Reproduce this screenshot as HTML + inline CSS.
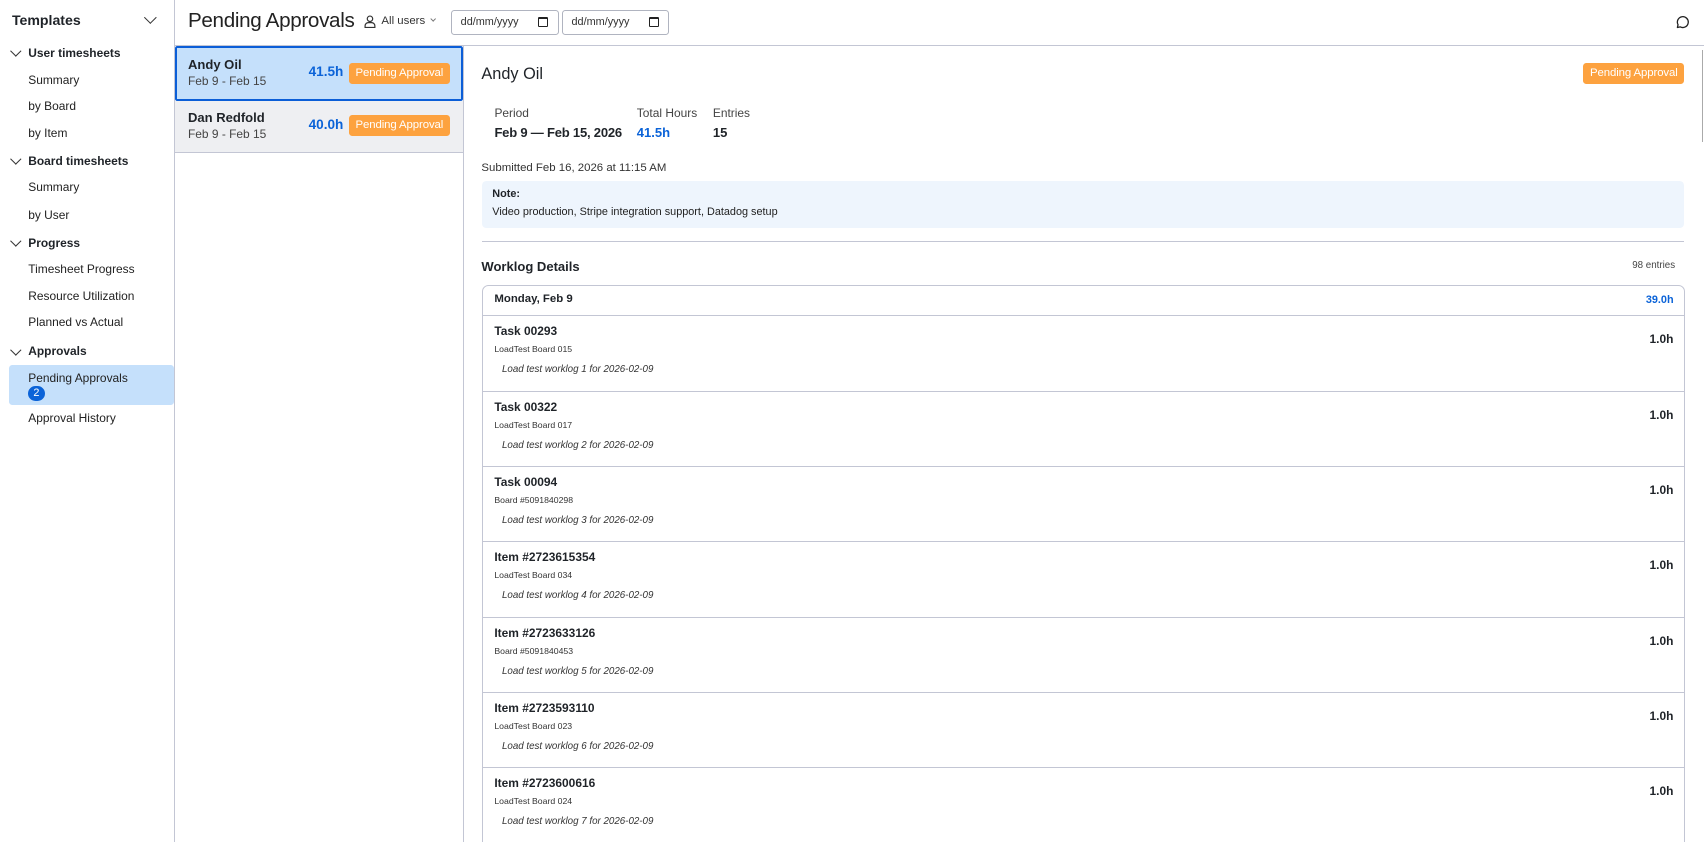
<!DOCTYPE html>
<html><head><meta charset="utf-8">
<style>
*{box-sizing:border-box;margin:0;padding:0}
html,body{width:1704px;height:842px;overflow:hidden;background:#fff}
#r{zoom:1.0867;width:1568px;height:775px;position:relative;font-family:"Liberation Sans",Arial,sans-serif;color:#1f2328;overflow:hidden}
.a{position:absolute;white-space:nowrap}
.side{position:absolute;left:0;top:0;width:161px;height:775px;border-right:1px solid #c3c6d4}
.sh{font-size:11px;font-weight:bold}
.si{font-size:11px;color:#222}
.chev{position:absolute;width:7px;height:7px;border-right:1.3px solid #333;border-bottom:1.3px solid #333;transform:rotate(45deg)}
.badge{position:absolute;background:#fda23f;color:#fff;font-size:10.5px;border-radius:3px;height:19px;line-height:19px;width:93px;text-align:center;letter-spacing:-0.1px}
.date{position:absolute;top:9px;width:99px;height:23px;border:1px solid #b0b4c0;border-radius:3px;font-size:10px;line-height:21px;padding-left:8px;color:#333}
.cal{position:absolute;right:9px;top:6px;width:9px;height:9px;border:1.2px solid #222;border-top-width:2.5px;border-radius:1px}
.row{position:absolute;left:0;width:1105px;height:70px;border-top:1px solid #c3c6d4}
.row b{position:absolute;left:10px;top:7px;font-size:11px}
.row .s{position:absolute;left:10px;top:26px;font-size:8px;color:#333}
.row i{position:absolute;left:17px;top:44px;font-size:9px;color:#333}
.row .h{position:absolute;right:10px;top:15px;font-size:11px;font-weight:bold}
</style></head><body><div id="r">
<div class="side">
 <div class="a" style="left:11px;top:11px;font-size:13px;font-weight:bold">Templates</div>
 <div class="chev" style="left:134px;top:12px;width:8px;height:8px"></div>
 <div class="chev" style="left:11px;top:43px"></div><div class="a sh" style="left:26px;top:42px">User timesheets</div>
 <div class="a si" style="left:26px;top:67px">Summary</div>
 <div class="a si" style="left:26px;top:91px">by Board</div>
 <div class="a si" style="left:26px;top:116px">by Item</div>
 <div class="chev" style="left:11px;top:143px"></div><div class="a sh" style="left:26px;top:142px">Board timesheets</div>
 <div class="a si" style="left:26px;top:166px">Summary</div>
 <div class="a si" style="left:26px;top:191px">by User</div>
 <div class="chev" style="left:11px;top:218px"></div><div class="a sh" style="left:26px;top:217px">Progress</div>
 <div class="a si" style="left:26px;top:241px">Timesheet Progress</div>
 <div class="a si" style="left:26px;top:266px">Resource Utilization</div>
 <div class="a si" style="left:26px;top:290px">Planned vs Actual</div>
 <div class="chev" style="left:11px;top:318px"></div><div class="a sh" style="left:26px;top:317px">Approvals</div>
 <div class="a" style="left:8px;top:336px;width:152px;height:37px;background:#c5e0fb;border-radius:3px"></div>
 <div class="a si" style="left:26px;top:341px">Pending Approvals</div>
 <div class="a" style="left:26px;top:355px;width:15px;height:14px;border-radius:7px;background:#0b63d8;color:#fff;font-size:10px;text-align:center;line-height:14px">2</div>
 <div class="a si" style="left:26px;top:378px">Approval History</div>
</div>
<div class="a" style="left:173px;top:8px;font-size:19px;color:#222;letter-spacing:-0.3px">Pending Approvals</div>
<svg class="a" style="left:335px;top:14px" width="11" height="12" viewBox="0 0 11 12"><circle cx="5.5" cy="3.5" r="2.5" fill="none" stroke="#333" stroke-width="1.1"/><path d="M1 11.5v-1.5a3 3 0 0 1 3-3h3a3 3 0 0 1 3 3v1.5z" fill="none" stroke="#333" stroke-width="1.1"/></svg>
<div class="a" style="left:351px;top:14px;font-size:10.5px;color:#333">All users</div>
<div class="chev" style="left:397px;top:16px;width:4px;height:4px;border-color:#777;border-width:1px"></div>
<div class="date" style="left:415px">dd/mm/yyyy<div class="cal"></div></div>
<div class="date" style="left:517px">dd/mm/yyyy<div class="cal"></div></div>
<svg class="a" style="left:1541px;top:14px" width="13" height="13" viewBox="0 0 13 13"><path d="M2.2 11.5l.6-2.6A5 5 0 1 1 4.8 10.9z" fill="none" stroke="#222" stroke-width="1.2" stroke-linejoin="round"/></svg>
<div class="a" style="left:161px;top:41px;width:1407px;border-top:1px solid #c3c6d4"></div>
<div class="a" style="left:426px;top:42px;height:733px;border-left:1px solid #c3c6d4"></div>
<div class="a" style="left:1566px;top:46px;height:85px;border-left:1px solid #aaa"></div>
<div class="a" style="left:161px;top:42px;width:265px;height:51px;background:#c5e0fb;border:2px solid #0b5ed7;border-radius:2px"></div>
<div class="a" style="left:173px;top:52px;font-size:12px;font-weight:bold">Andy Oil</div>
<div class="a" style="left:173px;top:68px;font-size:11px;color:#444">Feb 9 - Feb 15</div>
<div class="a" style="left:284px;top:59px;font-size:12.5px;font-weight:bold;color:#0b63d8">41.5h</div>
<div class="badge" style="left:321px;top:58px">Pending Approval</div>
<div class="a" style="left:161px;top:93px;width:265px;height:48px;background:#eeeff2;border-bottom:1px solid #c3c6d4"></div>
<div class="a" style="left:173px;top:101px;font-size:12px;font-weight:bold">Dan Redfold</div>
<div class="a" style="left:173px;top:117px;font-size:11px;color:#444">Feb 9 - Feb 15</div>
<div class="a" style="left:284px;top:108px;font-size:12.5px;font-weight:bold;color:#0b63d8">40.0h</div>
<div class="badge" style="left:321px;top:106px">Pending Approval</div>
<div class="a" style="left:443px;top:60px;font-size:15px">Andy Oil</div>
<div class="badge" style="left:1457px;top:58px">Pending Approval</div>
<div class="a" style="left:455px;top:98px;font-size:11px;color:#444">Period</div>
<div class="a" style="left:455px;top:115px;font-size:12px;font-weight:bold;letter-spacing:-0.2px">Feb 9 — Feb 15, 2026</div>
<div class="a" style="left:586px;top:98px;font-size:11px;color:#444">Total Hours</div>
<div class="a" style="left:586px;top:115px;font-size:12px;font-weight:bold;color:#0b63d8">41.5h</div>
<div class="a" style="left:656px;top:98px;font-size:11px;color:#444">Entries</div>
<div class="a" style="left:656px;top:115px;font-size:12px;font-weight:bold">15</div>
<div class="a" style="left:443px;top:149px;font-size:10.5px;color:#333">Submitted Feb 16, 2026 at 11:15 AM</div>
<div class="a" style="left:444px;top:167px;width:1106px;height:43px;background:#eef5fd;border-radius:4px"></div>
<div class="a" style="left:453px;top:173px;font-size:10px;font-weight:bold">Note:</div>
<div class="a" style="left:453px;top:190px;font-size:10px;color:#222">Video production, Stripe integration support, Datadog setup</div>
<div class="a" style="left:444px;top:222px;width:1106px;border-top:1px solid #c3c6d4"></div>
<div class="a" style="left:443px;top:238px;font-size:12px;font-weight:bold">Worklog Details</div>
<div class="a" style="left:1502px;top:239px;font-size:9px;color:#444">98 entries</div>
<div class="a" style="left:444px;top:262px;width:1107px;height:540px;border:1px solid #c3c6d4;border-radius:6px">
 <div class="a" style="left:10px;top:7px;font-size:10.5px;font-weight:bold">Monday, Feb 9</div>
 <div class="a" style="right:10px;top:8px;font-size:10px;font-weight:bold;color:#0b63d8">39.0h</div>
 <div class="row" style="top:27px"><b>Task 00293</b><div class="s">LoadTest Board 015</div><i>Load test worklog 1 for 2026-02-09</i><div class="h">1.0h</div></div>
 <div class="row" style="top:97px"><b>Task 00322</b><div class="s">LoadTest Board 017</div><i>Load test worklog 2 for 2026-02-09</i><div class="h">1.0h</div></div>
 <div class="row" style="top:166px"><b>Task 00094</b><div class="s">Board #5091840298</div><i>Load test worklog 3 for 2026-02-09</i><div class="h">1.0h</div></div>
 <div class="row" style="top:235px"><b>Item #2723615354</b><div class="s">LoadTest Board 034</div><i>Load test worklog 4 for 2026-02-09</i><div class="h">1.0h</div></div>
 <div class="row" style="top:305px"><b>Item #2723633126</b><div class="s">Board #5091840453</div><i>Load test worklog 5 for 2026-02-09</i><div class="h">1.0h</div></div>
 <div class="row" style="top:374px"><b>Item #2723593110</b><div class="s">LoadTest Board 023</div><i>Load test worklog 6 for 2026-02-09</i><div class="h">1.0h</div></div>
 <div class="row" style="top:443px"><b>Item #2723600616</b><div class="s">LoadTest Board 024</div><i>Load test worklog 7 for 2026-02-09</i><div class="h">1.0h</div></div>
</div>
</div></body></html>
